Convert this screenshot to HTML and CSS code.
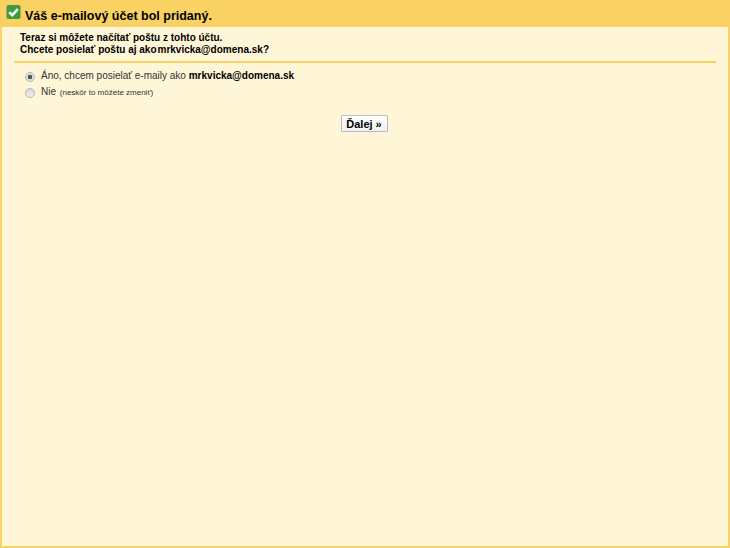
FILE: index.html
```html
<!DOCTYPE html>
<html lang="sk">
<head>
<meta charset="utf-8">
<title>E-mailový účet</title>
<link rel="stylesheet" href="styles.css">
</head>
<body>
<div class="frame">
  <header class="head">
    <svg class="check" width="15" height="15" viewBox="0 0 15 15" aria-hidden="true">
      <rect x="0.5" y="0" width="14" height="14" rx="2" fill="#3f9a3c"/>
      <path d="M3.2 7.2 L6.3 10.2 L11.8 4.2" fill="none" stroke="#fff" stroke-width="2.6"/>
    </svg>
    <h1 class="title">Váš e-mailový účet bol pridaný.</h1>
  </header>
  <main class="content">
    <div class="intro">
      <p class="line">Teraz si môžete načítať poštu z tohto účtu.</p>
      <p class="line">Chcete posielať poštu aj ako<span class="addr">mrkvicka@domena.sk</span>?</p>
    </div>
    <div class="options">
      <label class="option"><input class="radio" type="radio" name="send" checked><span>Áno, chcem posielať e-maily ako <b class="strong">mrkvicka@domena.sk</b></span></label>
      <label class="option"><input class="radio" type="radio" name="send"><span>Nie <small class="note">(neskôr to môžete zmeniť)</small></span></label>
    </div>
    <div class="actions"><button class="next" type="button">Ďalej »</button></div>
  </main>
</div>
</body>
</html>
```
FILE: styles.css
```css
html, body { margin: 0; height: 100%; }
body { font-family: "Liberation Sans", Arial, sans-serif; color: #000; }
.frame {
  box-sizing: border-box;
  height: 548px;
  display: flex;
  flex-direction: column;
  background: #fff5d7;
  border: solid #fad163;
  border-width: 0 2px 2px;
}
.head {
  height: 27px;
  flex: none;
  display: flex;
  align-items: center;
  gap: 4px;
  margin: 0 -2px;
  padding: 0 0 0 6px;
  background: #fad163;
}
.check { flex: none; margin-top: -3px; }
.title { margin: 0; font-size: 12.5px; font-weight: bold; padding-top: 4px; }
.content { flex: 1; padding: 5px 12px 0 12px; }
.intro {
  padding: 0 0 5px 6px;
  border-bottom: 2px solid #fad163;
  font-size: 10px;
  font-weight: bold;
  line-height: 12px;
}
.line { margin: 0; }
.addr { margin-left: 1px; }
.options { padding: 4px 0 0 11px; font-size: 10px; color: #333; }
.strong { color: #000; }
.option { display: flex; align-items: center; height: 16px; gap: 6px; }
.radio {
  appearance: none;
  box-sizing: border-box;
  width: 10px;
  height: 10px;
  margin: 3px 0 0;
  border: 1px solid #b5b5b5;
  border-radius: 50%;
  background: linear-gradient(#d8d8d8, #f0f0f0);
}
.radio:checked { background: radial-gradient(circle, #555 0 2px, #e2e2e2 2.6px); }
.note { font-size: 8px; margin-left: 1px; }
.actions { display: flex; justify-content: center; padding-top: 16px; padding-right: 2px; }
.next {
  height: 17px;
  width: 47px;
  padding: 0;
  font: bold 11px "Liberation Sans", Arial, sans-serif;
  color: #000;
  background: linear-gradient(#fff, #f0f0f0);
  border: 1px solid #bbb;
  border-radius: 1px;
}
```
